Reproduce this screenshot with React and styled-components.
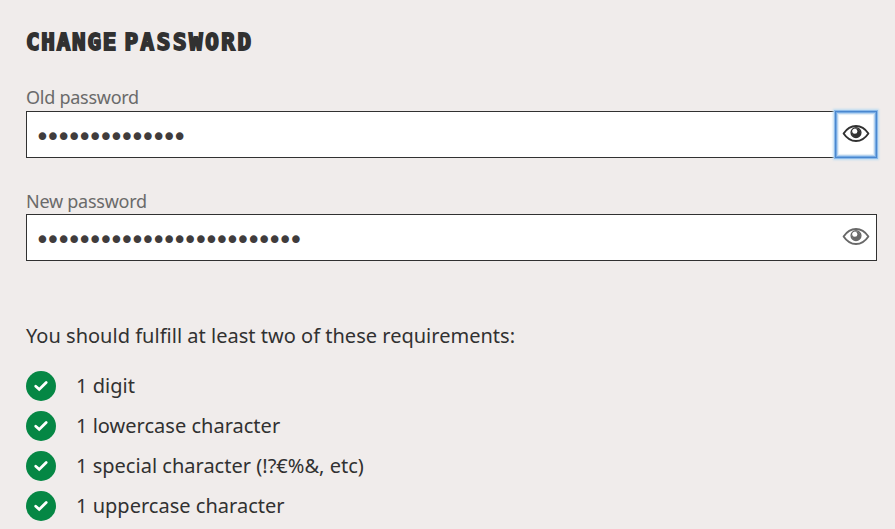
import React, { useState } from "react";
import styled, { createGlobalStyle } from "styled-components";

const GlobalStyle = createGlobalStyle`
  *, *::before, *::after { box-sizing: border-box; }
  body {
    margin: 0;
    background: #f0eceb;
    color: #313131;
    font-family: "Noto Sans", sans-serif;
    overflow: hidden;
  }
`;

const Page = styled.main`
  width: 895px;
  height: 529px;
  padding: 26px 18px 0 26px;
  overflow: hidden;
`;

const Title = styled.h1`
  margin: 0;
  height: 32px;
  font: 700 22.5px/32px "DejaVu Sans Mono", monospace;
  letter-spacing: 1.8px;
  word-spacing: -9px;
  text-transform: uppercase;
  white-space: nowrap;
  -webkit-text-stroke: 1.8px #313131;
`;

const WideWord = styled.span`
  letter-spacing: 2.6px;
`;

const Fields = styled.div`
  display: grid;
  gap: 31px;
  padding-top: 27px;
`;

const Field = styled.div`
  display: flex;
  flex-direction: column;
`;

const Label = styled.label`
  height: ${(p) => (p.$tall ? 26 : 25)}px;
  font-size: 18px;
  line-height: 24px;
  letter-spacing: -0.26px;
  color: #6a6a6a;
`;

const InputBox = styled.div`
  display: flex;
  height: 47px;
  background: #fff;
  border: 1px solid #313131;
`;

const Input = styled.input`
  flex: 1;
  min-width: 0;
  height: 45px;
  padding: 5px 7.8px 0;
  border: 0;
  outline: 0;
  background: transparent;
  color: #403c3c;
  font: 26px/40px "DejaVu Sans", sans-serif;
  letter-spacing: -4.78px;
`;

const Toggle = styled.button`
  display: flex;
  align-items: center;
  justify-content: center;
  width: 40px;
  height: 45px;
  padding: 0 0 2px;
  border: 0;
  background: #fff;
  color: ${(p) => (p.$active ? "#313131" : "#686868")};
  box-shadow: ${(p) =>
    p.$active
      ? "0 0 0 1px #4a87ce, 0 0 0 2px #8dbbea, 0 0 2px 3px #bfdcf1, inset 0 0 0 1px #75aae3, inset 0 0 0 2px #b5d2ef, inset 0 0 1px 3px #e1edf6"
      : "none"};
`;

const Requirements = styled.section`
  padding-top: 60px;
  font-size: 20px;
`;

const Intro = styled.p`
  margin: 0;
  height: 50px;
  line-height: 30px;
  letter-spacing: 0.015px;
`;

const List = styled.ul`
  display: grid;
  gap: 10px;
  margin: 0;
  padding: 0;
  list-style: none;
`;

const Item = styled.li`
  display: flex;
  align-items: center;
  gap: 20px;
  height: 30px;
  line-height: 30px;
  letter-spacing: 0.015px;
`;

const Badge = styled.span`
  display: flex;
  align-items: center;
  justify-content: center;
  width: 30px;
  height: 30px;
  border-radius: 50%;
  background: #058744;
`;

function EyeIcon() {
  return (
    <svg width="28" height="19" viewBox="0 0 28 19" fill="none" aria-hidden="true">
      <path d="M1.6 9.5C5 4.4 9 2 14 2S23 4.4 26.4 9.5C23 14.6 19 17 14 17S5 14.6 1.6 9.5Z" stroke="currentColor" strokeWidth="1.9" strokeLinejoin="round" />
      <circle cx="14" cy="8.6" r="4.9" stroke="currentColor" strokeWidth="1.4" />
      <circle cx="14.2" cy="8.8" r="4.4" fill="currentColor" />
      <circle cx="12.8" cy="7.2" r="2.5" fill="#fff" />
    </svg>
  );
}

function CheckIcon() {
  return (
    <svg width="16" height="14" viewBox="0 0 16 14" fill="none" aria-hidden="true">
      <path d="M2.7 7.3L6.2 10.4L13.2 3.5" stroke="#fff" strokeWidth="2.8" strokeLinecap="round" />
    </svg>
  );
}

function PasswordField({ id, label, value, active }) {
  const [visible, setVisible] = useState(false);
  return (
    <Field>
      <Label htmlFor={id} $tall={active}>{label}</Label>
      <InputBox>
        <Input id={id} type={visible ? "text" : "password"} defaultValue={value} />
        <Toggle type="button" $active={active} aria-label="Toggle visibility" onClick={() => setVisible(!visible)}>
          <EyeIcon />
        </Toggle>
      </InputBox>
    </Field>
  );
}

const requirements = [
  "1 digit",
  "1 lowercase character",
  "1 special character (!?€%&, etc)",
  "1 uppercase character",
];

export default function App() {
  return (
    <Page>
      <GlobalStyle />
      <Title>Change <WideWord>password</WideWord></Title>
      <Fields>
        <PasswordField id="old" label="Old password" value={"x".repeat(14)} active />
        <PasswordField id="new" label="New password" value={"x".repeat(25)} />
      </Fields>
      <Requirements>
        <Intro>You should fulfill at least two of these requirements:</Intro>
        <List>
          {requirements.map((text) => (
            <Item key={text}>
              <Badge><CheckIcon /></Badge>
              <span>{text}</span>
            </Item>
          ))}
        </List>
      </Requirements>
    </Page>
  );
}
